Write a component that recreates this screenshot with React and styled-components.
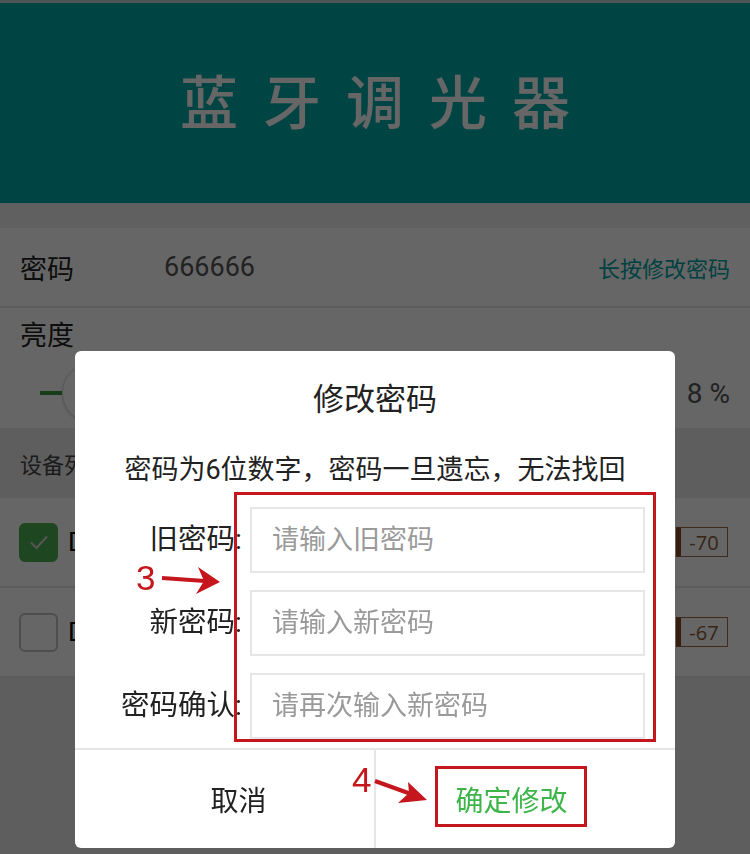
import React from 'react';
import styled, { createGlobalStyle } from 'styled-components';

const GlobalStyle = createGlobalStyle`
  html, body {
    margin: 0;
    padding: 0;
  }
  body {
    font-family: Roboto, "Noto Sans CJK SC", sans-serif;
    color: #222;
    background: #ebebeb;
  }
  * {
    box-sizing: border-box;
  }
`;

const Page = styled.div`
  min-height: 854px;
  background: #ebebeb;
`;

const Header = styled.header`
  height: 203px;
  padding-bottom: 8px;
  border-top: 3px solid #c9d6d6;
  background: #00abab;
  display: flex;
  align-items: center;
  justify-content: center;
`;

const Title = styled.h1`
  margin: 0;
  padding-left: 25px;
  color: #ffffff;
  font-size: 58px;
  font-weight: 500;
  letter-spacing: 25px;
`;

const Gap = styled.div`
  height: 25px;
  background: #f0f0f0;
`;

const InfoRow = styled.div`
  height: 80px;
  padding: 0 20px;
  display: flex;
  align-items: center;
  background: #fff;
  border-bottom: 2px solid #e3e3e3;
`;

const Label = styled.span`
  font-size: 27px;
  color: #222;
`;

const Value = styled.span`
  flex: 1;
  margin-left: 90px;
  font-size: 27px;
  color: #555;
`;

const LinkText = styled.span`
  font-size: 22px;
  color: #00a2a2;
`;

const BrightnessRow = styled.div`
  height: 120px;
  padding: 10px 20px 0;
  background: #fff;
  display: flex;
  flex-direction: column;
`;

const BrightnessLabel = styled(Label)`
  line-height: 36px;
  margin-bottom: 4px;
`;

const SliderLine = styled.div`
  height: 70px;
  display: flex;
  align-items: center;
`;

const Track = styled.div`
  flex: 1;
  margin-left: 20px;
  display: flex;
  align-items: center;
`;

const Fill = styled.div`
  width: 22px;
  height: 4px;
  background: #3d9a40;
`;

const Thumb = styled.div`
  width: 60px;
  height: 60px;
  border-radius: 50%;
  background: #fff;
  border: 1px solid #dcdcdc;
  box-shadow: 0 1px 3px rgba(0, 0, 0, 0.15);
`;

const Rest = styled.div`
  flex: 1;
  height: 4px;
  background: #d0d0d0;
`;

const Percent = styled.span`
  margin-left: 20px;
  font-size: 28px;
  color: #555;
`;

const SectionHeader = styled.div`
  height: 70px;
  padding: 0 20px;
  display: flex;
  align-items: center;
  background: #ebebeb;
  font-size: 22px;
  color: #444;
`;

const DeviceRow = styled.div`
  height: 90px;
  padding: 0 22px 0 19px;
  display: flex;
  align-items: center;
  background: #fff;
  border-bottom: 2px solid #e3e3e3;
`;

const Check = styled.div`
  width: 39px;
  height: 39px;
  border-radius: 6px;
  display: flex;
  align-items: center;
  justify-content: center;
  background: ${(p) => (p.checked ? '#4caf50' : '#fff')};
  border: 2px solid ${(p) => (p.checked ? '#4caf50' : '#c4c4c4')};
`;

const DeviceName = styled.span`
  flex: 1;
  margin-left: 10px;
  font-size: 26px;
  color: #111;
`;

const Rssi = styled.span`
  width: 52px;
  height: 30px;
  display: flex;
  align-items: center;
  justify-content: center;
  border: 1px solid #9c6b45;
  border-left: 5px solid #8b4a22;
  color: #8d5a35;
  font-size: 20px;
  font-family: "Open Sans", sans-serif;
`;

const Overlay = styled.div`
  position: fixed;
  inset: 0;
  background: rgba(0, 0, 0, 0.6);
  display: flex;
  justify-content: center;
  align-items: flex-start;
  padding-top: 351px;
`;

const Dialog = styled.div`
  position: relative;
  width: 600px;
  background: #fff;
  border-radius: 6px;
  display: flex;
  flex-direction: column;
`;

const DialogTitle = styled.div`
  padding-top: 30px;
  line-height: 38px;
  text-align: center;
  font-size: 31px;
  color: #222;
`;

const Message = styled.div`
  margin-top: 33px;
  line-height: 36px;
  text-align: center;
  font-size: 27px;
  color: #222;
`;

const Form = styled.div`
  margin-top: 19px;
  display: flex;
  flex-direction: column;
  gap: 17px;
`;

const FieldRow = styled.div`
  display: flex;
  align-items: center;
`;

const FieldLabel = styled.label`
  width: 167px;
  text-align: right;
  font-size: 28.5px;
  line-height: 36px;
  color: #222;
`;

const Input = styled.input`
  width: 395px;
  height: 66px;
  margin-left: 8px;
  padding: 0 20px;
  border: 2px solid #e6e6e6;
  border-radius: 0;
  outline: none;
  font-family: Roboto, "Noto Sans CJK SC", sans-serif;
  font-size: 27px;
  color: #222;
  background: #fff;

  &::placeholder {
    color: #9a9a9a;
  }
`;

const Footer = styled.div`
  margin-top: 9px;
  height: 100px;
  border-top: 2px solid #e6e6e6;
  display: flex;
`;

const FooterButton = styled.button`
  flex: 1;
  border: none;
  background: transparent;
  font-family: Roboto, "Noto Sans CJK SC", sans-serif;
  font-size: 28px;
  color: ${(p) => (p.primary ? '#3db54a' : '#222')};
  padding: ${(p) => (p.primary ? '0 28px 0 0' : '0 0 0 28px')};
  border-left: ${(p) => (p.primary ? '2px solid #e6e6e6' : 'none')};
  cursor: pointer;
`;

const RedBox = styled.div`
  position: absolute;
  left: ${(p) => p.x}px;
  top: ${(p) => p.y}px;
  width: ${(p) => p.w}px;
  height: ${(p) => p.h}px;
  border: 3px solid #c4161c;
  pointer-events: none;
`;

const StepNumber = styled.span`
  position: absolute;
  left: ${(p) => p.x}px;
  top: ${(p) => p.y}px;
  font-family: "Liberation Sans", Arial, sans-serif;
  font-size: 35px;
  line-height: 28px;
  color: #c4161c;
`;

const Arrows = styled.svg`
  position: absolute;
  inset: 0;
  width: 100%;
  height: 100%;
  pointer-events: none;
`;

function CheckMark() {
  return (
    <svg width="24" height="24" viewBox="0 0 24 24">
      <path d="M4 12.5l5.5 5.5L20 6.5" fill="none" stroke="#d8d8d8" strokeWidth="2" />
    </svg>
  );
}

const devices = [
  { name: 'DM1', rssi: -70, checked: true },
  { name: 'DM2', rssi: -67, checked: false },
];

export default function App() {
  return (
    <>
      <GlobalStyle />
      <Page>
        <Header>
          <Title>蓝牙调光器</Title>
        </Header>
        <Gap />
        <InfoRow>
          <Label>密码</Label>
          <Value>666666</Value>
          <LinkText>长按修改密码</LinkText>
        </InfoRow>
        <BrightnessRow>
          <BrightnessLabel>亮度</BrightnessLabel>
          <SliderLine>
            <Track>
              <Fill />
              <Thumb />
              <Rest />
            </Track>
            <Percent>8 %</Percent>
          </SliderLine>
        </BrightnessRow>
        <SectionHeader>设备列表</SectionHeader>
        {devices.map((d) => (
          <DeviceRow key={d.name}>
            <Check checked={d.checked}>{d.checked && <CheckMark />}</Check>
            <DeviceName>{d.name}</DeviceName>
            <Rssi>{d.rssi}</Rssi>
          </DeviceRow>
        ))}
      </Page>

      <Overlay>
        <Dialog>
          <DialogTitle>修改密码</DialogTitle>
          <Message>密码为6位数字，密码一旦遗忘，无法找回</Message>
          <Form>
            <FieldRow>
              <FieldLabel>旧密码:</FieldLabel>
              <Input placeholder="请输入旧密码" />
            </FieldRow>
            <FieldRow>
              <FieldLabel>新密码:</FieldLabel>
              <Input placeholder="请输入新密码" />
            </FieldRow>
            <FieldRow>
              <FieldLabel>密码确认:</FieldLabel>
              <Input placeholder="请再次输入新密码" />
            </FieldRow>
          </Form>
          <Footer>
            <FooterButton>取消</FooterButton>
            <FooterButton primary>确定修改</FooterButton>
          </Footer>

          {/* annotations */}
          <RedBox x={159} y={141} w={422} h={250} />
          <RedBox x={360} y={415} w={152} h={61} />
          <StepNumber x={61} y={213}>3</StepNumber>
          <StepNumber x={277} y={415}>4</StepNumber>
          <Arrows viewBox="0 0 600 497">
            <line x1="87" y1="227" x2="130" y2="230" stroke="#c4161c" strokeWidth="4" />
            <polygon points="145,231 123,216 129,230 121,243" fill="#c4161c" />
            <line x1="300" y1="430" x2="336" y2="443" stroke="#c4161c" strokeWidth="4" />
            <polygon points="352,449 333,431 334,442 323,452" fill="#c4161c" />
          </Arrows>
        </Dialog>
      </Overlay>
    </>
  );
}
